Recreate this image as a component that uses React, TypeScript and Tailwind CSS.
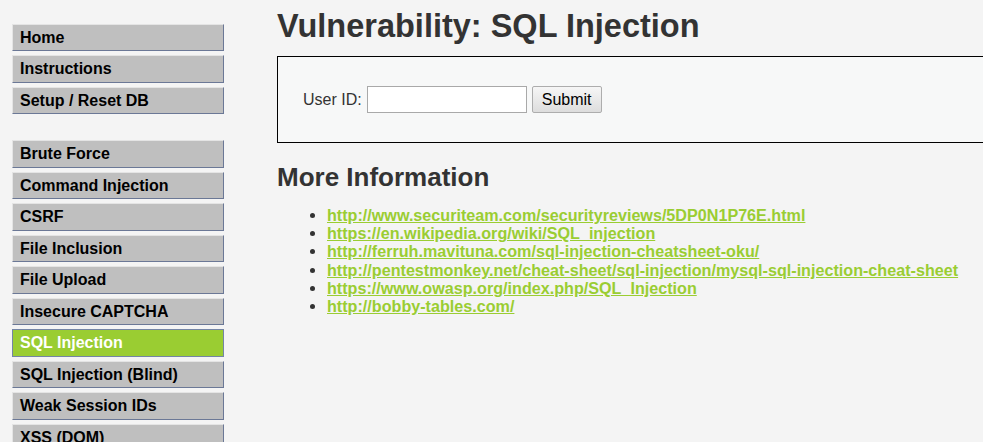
import React from "react";

const group1 = ["Home", "Instructions", "Setup / Reset DB"];
const group2 = [
  "Brute Force",
  "Command Injection",
  "CSRF",
  "File Inclusion",
  "File Upload",
  "Insecure CAPTCHA",
  "SQL Injection",
  "SQL Injection (Blind)",
  "Weak Session IDs",
  "XSS (DOM)",
];

const links = [
  "http://www.securiteam.com/securityreviews/5DP0N1P76E.html",
  "https://en.wikipedia.org/wiki/SQL_injection",
  "http://ferruh.mavituna.com/sql-injection-cheatsheet-oku/",
  "http://pentestmonkey.net/cheat-sheet/sql-injection/mysql-sql-injection-cheat-sheet",
  "https://www.owasp.org/index.php/SQL_Injection",
  "http://bobby-tables.com/",
];

function MenuItem({ label }: { label: string }) {
  const active = label === "SQL Injection";
  return (
    <li>
      <a
        className={
          active
            ? "block h-[27.5px] leading-[25.5px] pl-[7px] font-bold text-[16px] text-white bg-[#9acd32] border border-[#7485a5] mb-[4px]"
            : "block h-[27.5px] leading-[25.5px] pl-[7px] font-bold text-[16px] text-black bg-[#bfbfbf] border border-t-[#e4e4e4] border-l-[#e4e4e4] border-r-[#6b7896] border-b-[#6b7896] mb-[4px]"
        }
      >
        {label}
      </a>
    </li>
  );
}

export default function App() {
  return (
    <div
      className="flex w-[983px] h-[442px] overflow-hidden bg-[#f4f4f4] text-[#333]"
      style={{ fontFamily: '"Liberation Sans", Arial, sans-serif' }}
    >
      <div className="w-[265px] shrink-0 pl-[12px] pt-[23.5px]">
        <ul className="w-[212px]">
          {group1.map((l) => (
            <MenuItem key={l} label={l} />
          ))}
        </ul>
        <ul className="w-[212px] mt-[26px]">
          {group2.map((l) => (
            <MenuItem key={l} label={l} />
          ))}
        </ul>
      </div>
      <div className="shrink-0 pl-[12px]">
        <h1 className="text-[32.5px] font-bold leading-[37px] mt-[8px] text-[#333]">
          Vulnerability: SQL Injection
        </h1>
        <div className="mt-[11px] w-[760px] h-[87px] border border-black bg-[#f7f8f8] flex items-center pl-[25px]">
          <span className="text-[16px] text-[#333] mr-[5px]">User ID:</span>
          <input
            type="text"
            className="w-[160px] h-[27px] border border-[#a9a9a9] bg-white"
          />
          <button className="ml-[5px] w-[70px] h-[27px] border border-[#adadad] bg-gradient-to-b from-[#f6f6f6] to-[#dddddd] text-[16px] text-black rounded-[2px]">
            Submit
          </button>
        </div>
        <h2 className="text-[26px] font-bold leading-[30px] mt-[19px] text-[#333]">
          More Information
        </h2>
        <ul className="list-disc pl-[50px] mt-[14px] text-[#333] text-[16.15px] leading-[18.2px]">
          {links.map((l) => (
            <li key={l}>
              <a className="font-bold text-[#9acd32] underline">{l}</a>
            </li>
          ))}
        </ul>
      </div>
    </div>
  );
}
